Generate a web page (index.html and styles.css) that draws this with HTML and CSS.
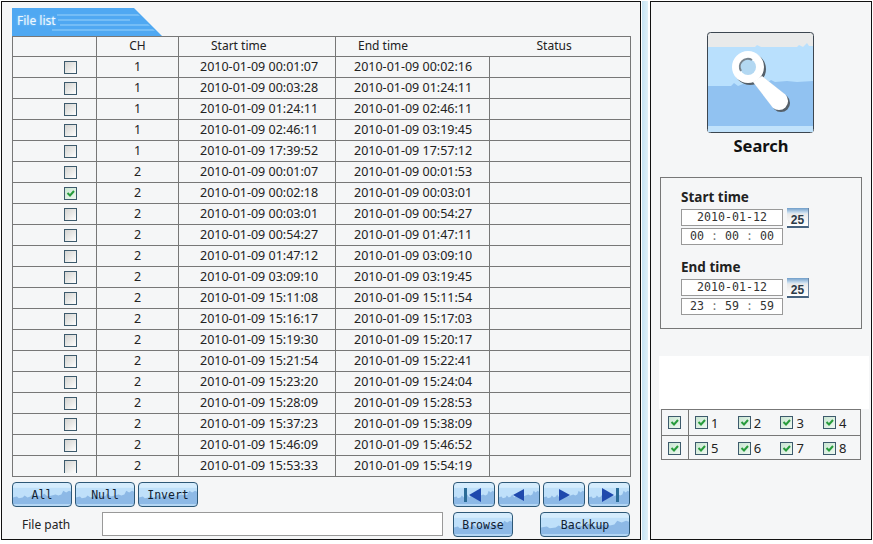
FILE: index.html
```html
<!DOCTYPE html>
<html lang="en">
<head>
<meta charset="utf-8">
<title>File list</title>
<link rel="stylesheet" href="styles.css">
</head>
<body>
<div class="page">
  <main class="list-panel">
    <div class="tab">
      <svg class="tab-art" width="150" height="28" viewBox="0 0 150 28" aria-hidden="true">
        <path d="M0 0H122L150 28H0Z" fill="#4fa8f2"/>
        <path d="M45 6H126L128 8H45ZM46 11H118V13H46ZM48 16H136L138 18H48ZM40 21H141L143 23H40Z" fill="#74bdf6"/>
      </svg>
      <span class="tab-label">File list</span>
    </div>
    <table class="files">
      <colgroup><col class="c-sel"><col class="c-ch"><col class="c-start"><col class="c-end"><col class="c-status"></colgroup>
      <thead>
        <tr><th></th><th>CH</th><th class="h-start">Start time</th><th class="h-end">End time</th><th class="h-status">Status</th></tr>
      </thead>
      <tbody>
        <tr><td><input class="cb" type="checkbox"></td><td>1</td><td class="t-start">2010-01-09 00:01:07</td><td class="t-end">2010-01-09 00:02:16</td><td></td></tr>
        <tr><td><input class="cb" type="checkbox"></td><td>1</td><td class="t-start">2010-01-09 00:03:28</td><td class="t-end">2010-01-09 01:24:11</td><td></td></tr>
        <tr><td><input class="cb" type="checkbox"></td><td>1</td><td class="t-start">2010-01-09 01:24:11</td><td class="t-end">2010-01-09 02:46:11</td><td></td></tr>
        <tr><td><input class="cb" type="checkbox"></td><td>1</td><td class="t-start">2010-01-09 02:46:11</td><td class="t-end">2010-01-09 03:19:45</td><td></td></tr>
        <tr><td><input class="cb" type="checkbox"></td><td>1</td><td class="t-start">2010-01-09 17:39:52</td><td class="t-end">2010-01-09 17:57:12</td><td></td></tr>
        <tr><td><input class="cb" type="checkbox"></td><td>2</td><td class="t-start">2010-01-09 00:01:07</td><td class="t-end">2010-01-09 00:01:53</td><td></td></tr>
        <tr><td><input class="cb" type="checkbox" checked></td><td>2</td><td class="t-start">2010-01-09 00:02:18</td><td class="t-end">2010-01-09 00:03:01</td><td></td></tr>
        <tr><td><input class="cb" type="checkbox"></td><td>2</td><td class="t-start">2010-01-09 00:03:01</td><td class="t-end">2010-01-09 00:54:27</td><td></td></tr>
        <tr><td><input class="cb" type="checkbox"></td><td>2</td><td class="t-start">2010-01-09 00:54:27</td><td class="t-end">2010-01-09 01:47:11</td><td></td></tr>
        <tr><td><input class="cb" type="checkbox"></td><td>2</td><td class="t-start">2010-01-09 01:47:12</td><td class="t-end">2010-01-09 03:09:10</td><td></td></tr>
        <tr><td><input class="cb" type="checkbox"></td><td>2</td><td class="t-start">2010-01-09 03:09:10</td><td class="t-end">2010-01-09 03:19:45</td><td></td></tr>
        <tr><td><input class="cb" type="checkbox"></td><td>2</td><td class="t-start">2010-01-09 15:11:08</td><td class="t-end">2010-01-09 15:11:54</td><td></td></tr>
        <tr><td><input class="cb" type="checkbox"></td><td>2</td><td class="t-start">2010-01-09 15:16:17</td><td class="t-end">2010-01-09 15:17:03</td><td></td></tr>
        <tr><td><input class="cb" type="checkbox"></td><td>2</td><td class="t-start">2010-01-09 15:19:30</td><td class="t-end">2010-01-09 15:20:17</td><td></td></tr>
        <tr><td><input class="cb" type="checkbox"></td><td>2</td><td class="t-start">2010-01-09 15:21:54</td><td class="t-end">2010-01-09 15:22:41</td><td></td></tr>
        <tr><td><input class="cb" type="checkbox"></td><td>2</td><td class="t-start">2010-01-09 15:23:20</td><td class="t-end">2010-01-09 15:24:04</td><td></td></tr>
        <tr><td><input class="cb" type="checkbox"></td><td>2</td><td class="t-start">2010-01-09 15:28:09</td><td class="t-end">2010-01-09 15:28:53</td><td></td></tr>
        <tr><td><input class="cb" type="checkbox"></td><td>2</td><td class="t-start">2010-01-09 15:37:23</td><td class="t-end">2010-01-09 15:38:09</td><td></td></tr>
        <tr><td><input class="cb" type="checkbox"></td><td>2</td><td class="t-start">2010-01-09 15:46:09</td><td class="t-end">2010-01-09 15:46:52</td><td></td></tr>
        <tr><td><input class="cb cb-cut" type="checkbox"></td><td>2</td><td class="t-start">2010-01-09 15:53:33</td><td class="t-end">2010-01-09 15:54:19</td><td></td></tr>
      </tbody>
    </table>
    <div class="controls">
      <button class="btn btn-sel" type="button">All</button>
      <button class="btn btn-sel" type="button">Null</button>
      <button class="btn btn-sel" type="button">Invert</button>
      <div class="nav">
        <button class="btn" type="button" aria-label="First"><svg width="26" height="18" viewBox="0 0 26 18"><rect x="3" y="2" width="3" height="14" fill="#2b6c98"/><path d="M20 2V16L8 9Z" fill="#1f49ad"/></svg></button>
        <button class="btn" type="button" aria-label="Previous"><svg width="26" height="18" viewBox="0 0 26 18"><path d="M18 3V15L7 9Z" fill="#1f49ad"/></svg></button>
        <button class="btn" type="button" aria-label="Next"><svg width="26" height="18" viewBox="0 0 26 18"><path d="M8 3V15L19 9Z" fill="#1f49ad"/></svg></button>
        <button class="btn" type="button" aria-label="Last"><svg width="26" height="18" viewBox="0 0 26 18"><path d="M6 2V16L18 9Z" fill="#1f49ad"/><rect x="20" y="2" width="3" height="14" fill="#2b6c98"/></svg></button>
      </div>
    </div>
    <div class="path-row">
      <label class="path-label" for="path">File path</label>
      <input class="path-input" id="path" type="text">
      <button class="btn btn-browse" type="button">Browse</button>
      <button class="btn btn-backup" type="button">Backkup</button>
    </div>
  </main>
  <div class="divider"></div>
  <aside class="search-panel">
    <svg class="search-icon" width="107" height="101" viewBox="0 0 107 101" role="img" aria-label="Search icon">
      <rect x="0.500" y="0.500" width="106" height="100" rx="3" fill="#e9eaea" stroke="#3c4650"/>
      <path d="M1 15H48L50 13L54 15H90L92 13L96 15L100 11L102 14H106V100H1Z" fill="#b9e0fd"/>
      <path d="M1 54H24L27 51L31 54L36 52L44 53L50 51H60L64 48L68 50L80 49L90 50L106 49V94H1Z" fill="#91c2f1"/>
      <path d="M1 94H106V97Q106 100 103 100H4Q1 100 1 97Z" fill="#c1e2fb"/>
      <g fill="#55606a" transform="translate(2 2)">
        <circle cx="41" cy="35" r="16"/>
        <path d="M46 50L65.600 75.400A9 9 0 0 0 78.400 62.600L55 44Z"/>
      </g>
      <g fill="#fff">
        <circle cx="41" cy="35" r="16"/>
        <path d="M46 50L65.600 75.400A9 9 0 0 0 78.400 62.600L55 44Z"/>
      </g>
      <circle cx="41" cy="35" r="8" fill="#b3d8f2"/>
      <path d="M34 39A8 8 0 0 1 45 28" fill="none" stroke="#76828c" stroke-width="2"/>
    </svg>
    <h2 class="search-title">Search</h2>
    <section class="time-box">
      <div class="time-group">
        <div class="time-label">Start time</div>
        <div class="time-row">
          <div class="field">2010-01-12</div>
          <div class="cal">25</div>
        </div>
        <div class="field field-time"><span>00</span><i>:</i><span>00</span><i>:</i><span>00</span></div>
      </div>
      <div class="time-group">
        <div class="time-label">End time</div>
        <div class="time-row">
          <div class="field">2010-01-12</div>
          <div class="cal">25</div>
        </div>
        <div class="field field-time"><span>23</span><i>:</i><span>59</span><i>:</i><span>59</span></div>
      </div>
    </section>
    <div class="blank"></div>
    <div class="channels">
      <div class="ch-all"><input class="cb" type="checkbox" checked></div>
      <div class="ch-list">
        <label class="ch"><input class="cb" type="checkbox" checked>1</label>
        <label class="ch"><input class="cb" type="checkbox" checked>2</label>
        <label class="ch"><input class="cb" type="checkbox" checked>3</label>
        <label class="ch"><input class="cb" type="checkbox" checked>4</label>
      </div>
      <div class="ch-all ch-second"><input class="cb" type="checkbox" checked></div>
      <div class="ch-list ch-second">
        <label class="ch"><input class="cb" type="checkbox" checked>5</label>
        <label class="ch"><input class="cb" type="checkbox" checked>6</label>
        <label class="ch"><input class="cb" type="checkbox" checked>7</label>
        <label class="ch"><input class="cb" type="checkbox" checked>8</label>
      </div>
    </div>
  </aside>
</div>
</body>
</html>
```
FILE: styles.css
```css
* { box-sizing: border-box; }
html, body { margin: 0; background: #fff; }
body { font-family: "Noto Sans", sans-serif; color: #222; }

.page { display: flex; height: 544px; padding: 1px 1px 4px 1px; }

.list-panel {
  width: 640px;
  border: 1px solid #111;
  background: #f5f6f7;
  padding: 6px 0 0 10px;
}
.divider {
  width: 9px;
  border-left: 1px solid #fff;
  border-right: 2px solid #fff;
  background: linear-gradient(90deg, #c6e4f4, #dff0f8);
}
.search-panel {
  width: 222px;
  border: 1px solid #111;
  background: #f5f6f7;
  display: flex;
  flex-direction: column;
  padding: 30px 0 0 0;
}

/* tab */
.tab { position: relative; width: 150px; height: 28px; }
.tab-art { display: block; }
.tab-label {
  position: absolute;
  left: 5px;
  top: 6px;
  font-size: 12px;
  line-height: 14px;
  color: #eef8ff;
  text-shadow: 0 0 2px #a9d8fa;
}

/* table */
.files {
  table-layout: fixed;
  border-collapse: collapse;
  width: 618px;
  font-size: 12.500px;
}
.c-sel { width: 84px; }
.c-ch { width: 82px; }
.c-start { width: 157px; }
.c-end { width: 154px; }
.c-status { width: 141px; }
.files th, .files td {
  border: 1px solid #777;
  padding: 0;
  text-align: center;
  font-weight: 400;
  overflow: hidden;
  white-space: nowrap;
}
.files th { height: 20px; font-size: 12px; line-height: 16px; padding-bottom: 2px; }
.files td { height: 21px; line-height: 18px; padding-bottom: 1px; }
.files th.h-start { text-align: left; padding-left: 32px; }
.files th.h-end { text-align: left; padding-left: 22px; border-right: 0; }
.files th.h-status { text-align: left; padding-left: 47px; border-left: 0; }
.files td.t-start { text-align: left; padding-left: 21px; }
.files td.t-end { text-align: left; padding-left: 18px; }

/* checkboxes */
.cb {
  appearance: none;
  display: block;
  width: 13px;
  height: 13px;
  margin: 0;
  border: 1px solid #3d5a6c;
  background: linear-gradient(135deg, #d4d4d2, #e8e8e6 50%, #fff);
}
.cb:checked {
  background: url("data:image/svg+xml,%3Csvg xmlns='http://www.w3.org/2000/svg' width='11' height='11'%3E%3Cpath d='M2.500 5L5 7.500L9 3' fill='none' stroke='%23279c3c' stroke-width='2'/%3E%3C/svg%3E") center no-repeat, linear-gradient(135deg, #c9e6d2, #eef8f0);
}
.files .cb { margin: 1px 0 0 51px; }
.cb-cut { border-bottom: 0; }

/* buttons */
.btn {
  display: flex;
  align-items: center;
  justify-content: center;
  height: 25px;
  padding: 0;
  border: 1px solid #2d5877;
  border-radius: 4px;
  font-family: "DejaVu Sans Mono", monospace;
  font-size: 11.500px;
  color: #123;
  background: url("data:image/svg+xml,%3Csvg xmlns='http://www.w3.org/2000/svg' viewBox='0 0 60 24' preserveAspectRatio='none'%3E%3Crect width='60' height='24' fill='%23bfe0fa'/%3E%3Crect width='60' height='5' fill='%23d5ecfd'/%3E%3Cpath d='M0 15L4 14L6 16L10 15L12 13L15 15L18 14L20 12L23 15L26 13L30 14L32 11L36 14L40 13L44 12L47 13L50 12L52 8L55 10L58 8L60 9V22H0Z' fill='%238db9e6'/%3E%3Crect y='22' width='60' height='2' fill='%23b4d6f4'/%3E%3C/svg%3E") center / 100% 100% no-repeat;
}
.btn svg { display: block; }
.controls { display: flex; gap: 3px; width: 618px; margin-top: 5px; }
.btn-sel { width: 60px; }
.nav { display: grid; grid-template-columns: repeat(4, 1fr); gap: 3.500px; width: 177px; margin-left: auto; }

.path-row { display: flex; align-items: flex-start; width: 618px; margin-top: 5px; }
.path-label { width: 90px; padding: 6px 0 0 10px; font-size: 12px; line-height: 14px; }
.path-input {
  width: 341px;
  height: 24px;
  margin: 0;
  border: 1px solid #999;
  background: #fff;
}
.btn-browse { width: 60px; margin-left: 10px; }
.btn-backup { width: 90px; margin-left: auto; }

/* search panel */
.search-icon { display: block; margin-left: 56px; }
.search-title {
  margin: 4px 0 0 0;
  text-align: center;
  font-size: 16.500px;
  font-weight: 700;
  line-height: 17px;
  color: #111;
}

.time-box {
  margin: 23px 0 0 9px;
  width: 202px;
  height: 152px;
  border: 1px solid #777;
  padding: 10px 0 0 20px;
}
.time-group { display: flex; flex-direction: column; }
.time-group + .time-group { margin-top: 13px; }
.time-label {
  font-size: 13.500px;
  font-weight: 700;
  line-height: 18px;
  color: #222;
}
.time-row { display: flex; align-items: flex-start; gap: 4px; margin-top: 3px; }
.field {
  width: 102px;
  height: 17px;
  border: 1px solid #999;
  background: #fff;
  text-align: center;
  font-family: "DejaVu Sans Mono", monospace;
  font-size: 11.600px;
  line-height: 15px;
  color: #333;
}
.field-time {
  display: flex;
  justify-content: center;
  gap: 7px;
}
.field-time i { font-style: normal; color: #777; }
.cal {
  width: 22px;
  height: 20px;
  margin-top: -1px;
  padding-top: 6px;
  border-bottom: 2px solid #46627f;
  border-right: 1px solid #6c86a3;
  background: linear-gradient(#6f9dc9 0, #d3e4f2 5px, #e9e9e9 6px, #fff 100%);
  text-align: center;
  font-family: "Liberation Sans Narrow", "Liberation Sans", sans-serif;
  font-size: 12px;
  font-weight: 700;
  line-height: 12px;
  color: #2b3a48;
}

.blank { height: 53px; margin: 27px 2px 0 8px; background: #fff; }
.channels {
  display: grid;
  grid-template-columns: 27px 1fr;
  grid-template-rows: 25px 25px;
  width: 200px;
  height: 51px;
  margin-left: 10px;
  border: 1px solid #777;
}
.ch-all { display: flex; align-items: center; justify-content: center; border-right: 1px solid #777; padding-right: 1px; }
.ch-second { border-top: 1px solid #777; }
.ch-list { display: grid; grid-template-columns: repeat(3, 42.700px) 1fr; padding-left: 6px; align-items: center; }
.ch { display: flex; align-items: center; gap: 3px; font-size: 13px; line-height: 14px; color: #222; }
```
